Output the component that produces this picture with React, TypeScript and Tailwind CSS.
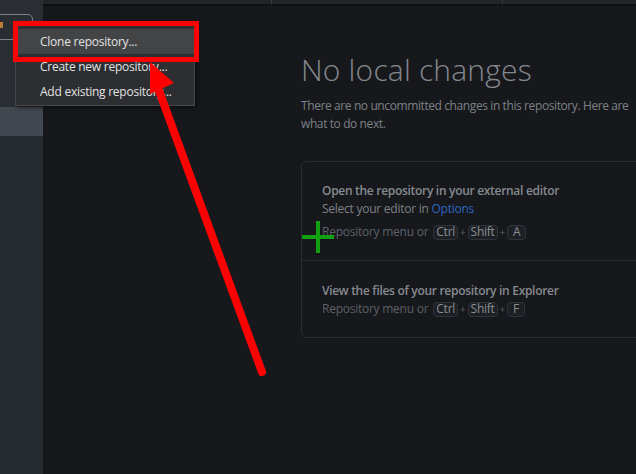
import React from "react";

const font = { fontFamily: '"Open Sans", "Segoe UI", sans-serif' };

function Kbd({ children }: { children: React.ReactNode }) {
  return (
    <span className="inline-flex h-[15px] items-center rounded-[4px] border border-[#30343a] bg-[#1c1f23] px-[2px] text-[12px] leading-none text-[#8b8f94]">
      {children}
    </span>
  );
}

function Shortcut({ k }: { k: string }) {
  return (
    <div className="flex items-center gap-[1px] text-[12px] tracking-[-0.25px] text-[#5d6167]">
      <span className="mr-[4px]">Repository menu or</span>
      <Kbd>Ctrl</Kbd>
      <span className="px-[1px] text-[10px]">+</span>
      <Kbd>Shift</Kbd>
      <span className="px-[1px] text-[10px]">+</span>
      <Kbd>
        <span className="px-[3px]">{k}</span>
      </Kbd>
    </div>
  );
}

export default function App() {
  return (
    <div
      className="relative flex h-[474px] w-[636px] overflow-hidden bg-[#16181c]"
      style={font}
    >
      {/* Left column */}
      <div className="flex w-[43px] shrink-0 flex-col">
        <div className="relative h-[107px] bg-[#2a2e33]">
          <div className="absolute left-[-12px] top-[14px] h-[26px] w-[45px] rounded-[5px] border border-[#7d8288]">
            <div className="absolute left-[11px] top-[7px] h-[6px] w-[3px] bg-[#c07a3a]" />
          </div>
        </div>
        <div className="h-[29px] bg-[#424850]" />
        <div className="flex-1 bg-[#262b30]" />
      </div>

      {/* Main */}
      <div className="flex min-w-0 flex-1 flex-col">
        <div className="flex h-[4px] shrink-0 bg-[#212428]">
          <div className="w-[229px] border-r border-[#363a3f]" />
          <div className="w-[231px] border-r border-[#363a3f]" />
          <div className="flex-1" />
        </div>
        <div className="h-[2px] shrink-0 bg-[#0f1113]" />
        <div className="min-w-0 flex-1 overflow-hidden pl-[258px] pt-[46px]">
          <h1 className="whitespace-nowrap text-[30px] font-light leading-[36px] tracking-[0.2px] text-[#85898e]">
            No local changes
          </h1>
          <p className="mt-[9px] text-[12px] leading-[18px] tracking-[-0.4px] text-[#7d8186]">
            <span className="block whitespace-nowrap">
              There are no uncommitted changes in this repository. Here are
            </span>
            <span className="block whitespace-nowrap">what to do next.</span>
          </p>

          <div className="mt-[28px] w-[420px] rounded-[6px] border border-[#2a2d32]">
            <div className="px-[20px] pb-[17px] pt-[20px]">
              <div className="whitespace-nowrap text-[12px] font-semibold leading-[18px] tracking-[-0.3px] text-[#868a8f]">
                Open the repository in your external editor
              </div>
              <div className="whitespace-nowrap text-[12px] leading-[18px] tracking-[-0.25px] text-[#7d8186]">
                Select your editor in <span className="text-[#2f66c0]">Options</span>
              </div>
              <div className="mt-[3px] flex h-[22px] items-center">
                <Shortcut k="A" />
              </div>
            </div>
            <div className="border-t border-[#2a2d32] px-[20px] pb-[19px] pt-[21px]">
              <div className="whitespace-nowrap text-[12px] font-semibold leading-[18px] tracking-[-0.3px] text-[#868a8f]">
                View the files of your repository in Explorer
              </div>
              <div className="flex h-[18px] items-center">
                <Shortcut k="F" />
              </div>
            </div>
          </div>
        </div>
      </div>

      {/* Dropdown menu */}
      <div className="absolute left-[15px] top-[22px] w-[180px] border border-[#46484b] bg-[#2c2e31] pb-[1px] pt-[6px] text-[12px] tracking-[-0.25px] text-[#e2e2e2] shadow-[2px_2px_4px_rgba(0,0,0,0.5)]">
        <div className="flex h-[25px] items-center bg-[#434446] pl-[24px]">
          Clone repository...
        </div>
        <div className="flex h-[25px] items-center pl-[24px]">
          Create new repository...
        </div>
        <div className="flex h-[25px] items-center pl-[24px]">
          Add existing repository...
        </div>
      </div>

      {/* Red highlight box */}
      <div className="absolute left-[13px] top-[21px] h-[41px] w-[186px] border-[5px] border-[#ff0000]" />

      {/* Annotations */}
      <svg className="pointer-events-none absolute left-0 top-0" width="636" height="474">
        <line x1="262" y1="372" x2="158" y2="88" stroke="#ff0000" strokeWidth="8" strokeLinecap="round" />
        <polygon points="150,62 174,83 150,94" fill="#ff0000" />
        <rect x="302" y="235" width="32" height="4" fill="#11a011" />
        <rect x="316" y="221" width="4" height="32" fill="#11a011" />
      </svg>
    </div>
  );
}
